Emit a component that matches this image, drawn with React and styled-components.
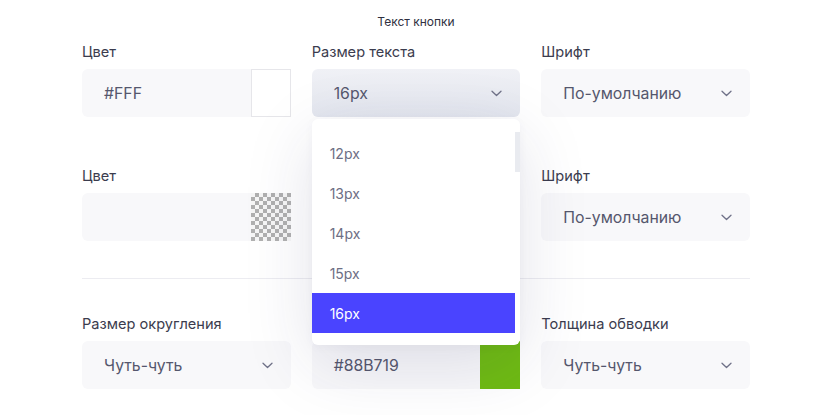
import React from "react";
import styled, { createGlobalStyle } from "styled-components";

const Global = createGlobalStyle`
  html, body { margin: 0; padding: 0; background: #fff; }
  body { font-family: Inter, "Noto Sans", sans-serif; -webkit-font-smoothing: antialiased; }
  * { box-sizing: border-box; }
`;

const Page = styled.div`
  width: 832px;
  height: 415px;
  overflow: hidden;
  padding: 14px 82px 0;
`;

const Title = styled.div`
  text-align: center;
  font-size: 12px;
  line-height: 16px;
  color: #2f3040;
  margin-bottom: 13px;
`;

const Grid = styled.div`
  display: grid;
  grid-template-columns: repeat(3, 1fr);
  column-gap: 21px;
  row-gap: 50px;
`;

const Field = styled.div`
  position: relative;
  display: flex;
  flex-direction: column;
  gap: 8px;
`;

const Label = styled.div`
  font-size: 14.6px;
  line-height: 18px;
  min-height: 18px;
  color: #3b3c4e;
`;

const Control = styled.div`
  height: 48px;
  border-radius: 6px;
  display: flex;
  align-items: center;
  padding-left: 22px;
  padding-right: ${(p) => (p.$flush ? "0" : "18px")};
  font-size: 15.8px;
  color: #55576d;
  background: ${(p) =>
    p.$active ? "linear-gradient(180deg, #f0f1f6 0%, #e3e6ee 100%)" : "#f8f8fa"};
`;

const Value = styled.span`
  flex: 1;
`;

const Chevron = styled.svg`
  width: 11px;
  height: 7px;
  flex: none;
`;

const Swatch = styled.div`
  width: 40px;
  align-self: stretch;
  flex: none;
  background: ${(p) => p.$color};
  border: ${(p) => (p.$bordered ? "1px solid #e6e6ea" : "none")};
`;

const Checker = styled.div`
  width: 40px;
  align-self: stretch;
  flex: none;
  background-color: #f6f6f6;
  background-image: conic-gradient(#b0b0b0 25%, transparent 0 50%, #b0b0b0 0 75%, transparent 0);
  background-size: 8px 8px;
`;

const Divider = styled.div`
  height: 1px;
  background: #ececf1;
  margin: 37px 0 36px;
`;

const Dropdown = styled.div`
  position: absolute;
  top: calc(100% + 2px);
  left: 0;
  right: 0;
  z-index: 10;
  background: #fff;
  border-radius: 6px;
  padding: 14px 0 12px;
  box-shadow: 0 18px 70px rgba(40, 40, 90, 0.13), 0 2px 10px rgba(40, 40, 90, 0.04);
  display: flex;
`;

const List = styled.div`
  flex: 1;
  display: flex;
  flex-direction: column;
`;

const Item = styled.div`
  height: 40px;
  display: flex;
  align-items: center;
  padding-left: 18px;
  font-size: 14px;
  color: ${(p) => (p.$selected ? "#fff" : "#6d6e84")};
  background: ${(p) => (p.$selected ? "#4a44ff" : "transparent")};
`;

const Track = styled.div`
  width: 5px;
  flex: none;
`;

const Thumb = styled.div`
  height: 40px;
  margin-top: -1px;
  background: #e9ebf0;
`;

const ChevronIcon = () => (
  <Chevron viewBox="0 0 11 7" fill="none">
    <path d="M1 1.2l4.5 4.3L10 1.2" stroke="#6f7188" strokeWidth="1.3" strokeLinecap="round" strokeLinejoin="round" />
  </Chevron>
);

const Select = ({ value, active }) => (
  <Control $active={active}>
    <Value>{value}</Value>
    <ChevronIcon />
  </Control>
);

const ColorInput = ({ value, children }) => (
  <Control $flush>
    <Value>{value}</Value>
    {children}
  </Control>
);

const sizes = ["12px", "13px", "14px", "15px", "16px"];

export default function App() {
  return (
    <>
      <Global />
      <Page>
        <Title>Текст кнопки</Title>
        <Grid>
          <Field>
            <Label>Цвет</Label>
            <ColorInput value="#FFF">
              <Swatch $color="#fff" $bordered />
            </ColorInput>
          </Field>
          <Field>
            <Label>Размер текста</Label>
            <Select value="16px" active />
            <Dropdown>
              <List>
                {sizes.map((s) => (
                  <Item key={s} $selected={s === "16px"}>
                    {s}
                  </Item>
                ))}
              </List>
              <Track>
                <Thumb />
              </Track>
            </Dropdown>
          </Field>
          <Field>
            <Label>Шрифт</Label>
            <Select value="По-умолчанию" />
          </Field>

          <Field>
            <Label>Цвет</Label>
            <ColorInput value="">
              <Checker />
            </ColorInput>
          </Field>
          <div />
          <Field>
            <Label>Шрифт</Label>
            <Select value="По-умолчанию" />
          </Field>
        </Grid>
        <Divider />
        <Grid>
          <Field>
            <Label>Размер округления</Label>
            <Select value="Чуть-чуть" />
          </Field>
          <Field>
            <Label />
            <ColorInput value="#88B719">
              <Swatch $color="#6fbb13" />
            </ColorInput>
          </Field>
          <Field>
            <Label>Толщина обводки</Label>
            <Select value="Чуть-чуть" />
          </Field>
        </Grid>
      </Page>
    </>
  );
}
